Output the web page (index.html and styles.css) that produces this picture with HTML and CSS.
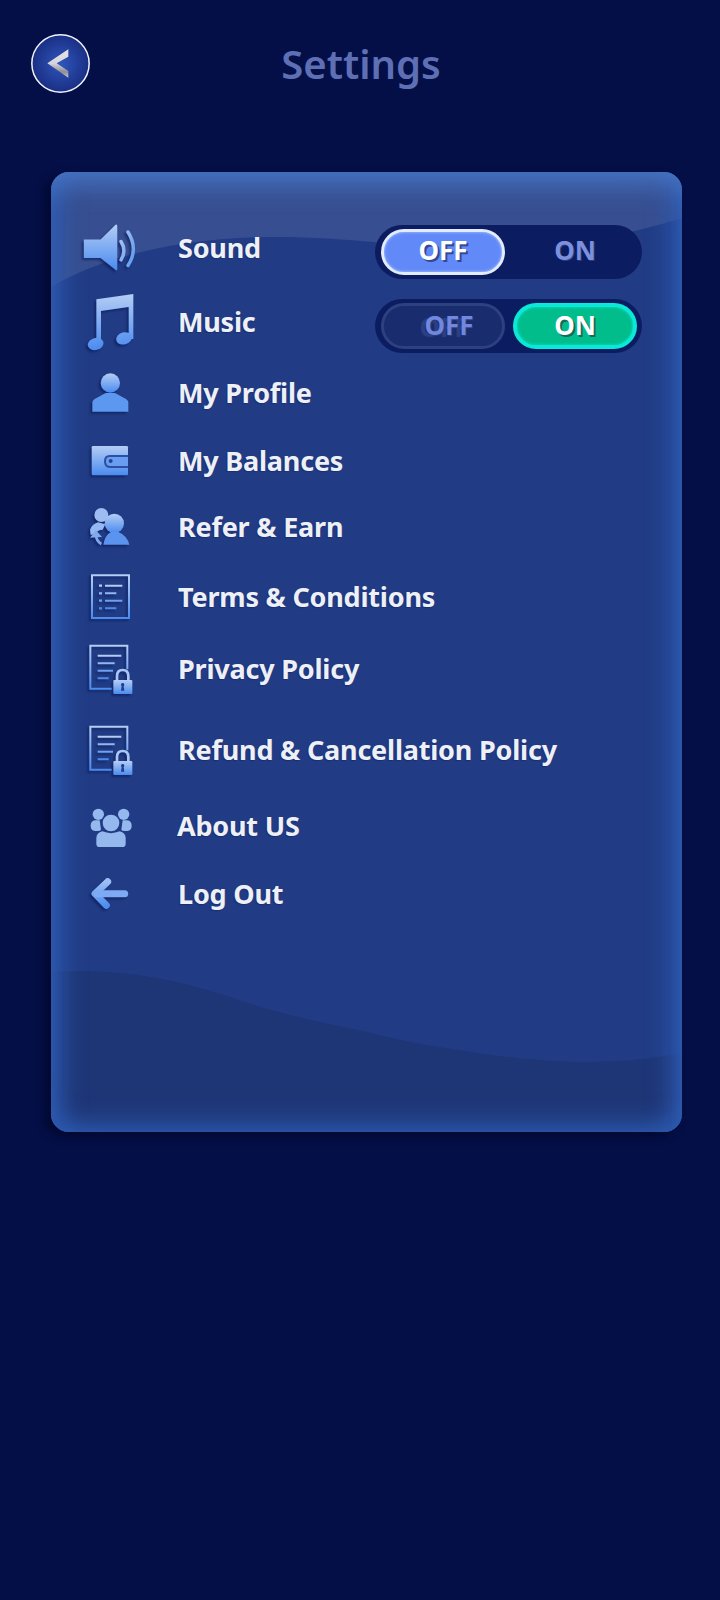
FILE: index.html
```html
<!DOCTYPE html>
<html lang="en">
<head>
<meta charset="utf-8">
<title>Settings</title>
<link rel="stylesheet" href="styles.css">
</head>
<body>
<svg class="defs" width="0" height="0" aria-hidden="true">
  <defs>
    <linearGradient id="blue" x1="0" y1="0" x2="0" y2="1">
      <stop offset="0" stop-color="#b4cdf5"/>
      <stop offset="1" stop-color="#4a8bef"/>
    </linearGradient>
    <linearGradient id="note" gradientUnits="userSpaceOnUse" x1="0" y1="257" x2="0" y2="425">
      <stop offset="0" stop-color="#b4cdf5"/>
      <stop offset="1" stop-color="#4a8bef"/>
    </linearGradient>
    <linearGradient id="side" x1="0" y1="0" x2="1" y2="1">
      <stop offset="0" stop-color="#a9c6f5"/>
      <stop offset="1" stop-color="#5c97f0"/>
    </linearGradient>
    <linearGradient id="arrow" x1="0" y1="0" x2="0" y2="1">
      <stop offset="0" stop-color="#9cbef4"/>
      <stop offset="1" stop-color="#4f8eef"/>
    </linearGradient>
    <linearGradient id="silver" x1="0" y1="0" x2="0" y2="1">
      <stop offset="0" stop-color="#e6e6ea"/>
      <stop offset=".5" stop-color="#d4d4d9"/>
      <stop offset=".8" stop-color="#8d8d95"/>
      <stop offset="1" stop-color="#c9c9ce"/>
    </linearGradient>
    <radialGradient id="knob">
      <stop offset="0" stop-color="#2f56bd"/>
      <stop offset="1" stop-color="#1a2f84"/>
    </radialGradient>
  </defs>
</svg>

<header class="topbar">
  <button class="back" type="button" aria-label="Back">
    <svg width="59" height="59" viewBox="0 0 177 177">
      <circle cx="88.5" cy="88.500" r="86" fill="url(#knob)" stroke="#f1f3fb" stroke-width="4.500"/>
      <path d="M112 46V68L77 88L112 111V131L49 88Z" fill="url(#silver)"/>
    </svg>
  </button>
  <h1 class="title">Settings</h1>
</header>

<main class="panel">
  <svg class="waves" viewBox="0 0 631 960" preserveAspectRatio="none" aria-hidden="true">
    <path class="wave-top" d="M0 115C50 85 130 65 224 65C300 65 350 75 430 77C500 78 570 65 631 46V0H0Z"/>
    <path class="wave-bottom" d="M0 800C10 799 16 799 22 799C70 799 120 805 179 825C230 843 270 850 316 860C350 869 380 874 408 878C450 885 495 890 537 890C570 890 600 887 631 881V960H0Z"/>
  </svg>

  <ul class="menu">
    <li class="row row-sound">
      <span class="icon">
        <svg width="63" height="57" viewBox="60 30 190 170">
          <path d="M72 90H125L170 45Q178 38 178 48V182Q178 192 170 184L125 148H72Z" fill="url(#blue)"/>
          <path d="M190 96Q208 125 190 154M212 66Q246 120 212 172" fill="none" stroke="url(#side)" stroke-width="11" stroke-linecap="round"/>
        </svg>
      </span>
      <span class="label">Sound</span>
      <div class="toggle">
        <span class="pill pill-off-active">OFF</span>
        <span class="pill pill-idle">ON</span>
      </div>
    </li>
    <li class="row row-music">
      <span class="icon">
        <svg width="54" height="62" viewBox="68 248 162 186">
          <path d="M108 273L219 257V392H205V296L122 308V408H108Z" fill="url(#note)"/>
          <ellipse cx="106" cy="407" rx="24" ry="18" transform="rotate(-15 106 407)" fill="url(#note)"/>
          <ellipse cx="191" cy="390" rx="24" ry="18" transform="rotate(-15 191 390)" fill="url(#note)"/>
        </svg>
      </span>
      <span class="label">Music</span>
      <div class="toggle">
        <span class="pill pill-off-dim">OFF</span>
        <span class="pill pill-on">ON</span>
      </div>
    </li>
    <li class="row row-profile">
      <span class="icon">
        <svg width="44" height="44" viewBox="85 488 132 132">
          <circle cx="152" cy="524" r="29" fill="url(#blue)"/>
          <path d="M98 610V582Q98 574 112 568L138 554H166L192 568Q206 574 206 582V610Z" fill="#5c97f0"/>
        </svg>
      </span>
      <span class="label">My Profile</span>
    </li>
    <li class="row row-balances">
      <span class="icon">
        <svg width="42" height="34" viewBox="60 44 126 102">
          <rect x="68" y="50" width="109" height="88" rx="4" fill="url(#blue)"/>
          <path d="M177 80H122Q108 80 108 96Q108 113 122 113H177" fill="#6a9df0" stroke="#2b4ea6" stroke-width="6"/>
          <circle cx="125" cy="95" r="6" fill="#234598"/>
        </svg>
      </span>
      <span class="label">My Balances</span>
    </li>
    <li class="row row-refer">
      <span class="icon">
        <svg width="44" height="40" viewBox="58 234 132 120">
          <circle cx="98" cy="258" r="21" fill="#9dbdf2"/>
          <path d="M64 302Q70 286 88 280L110 286L102 302Q88 302 80 314L66 318Z" fill="#94b8f1"/>
          <path d="M98 345Q82 336 82 316" fill="none" stroke="#80a9ef" stroke-width="8"/>
          <path d="M64 326L82 304L100 324Z" fill="#80a9ef"/>
          <circle cx="137" cy="283" r="29" fill="url(#blue)"/>
          <path d="M104 347Q108 318 128 308H148Q176 320 182 347Z" fill="#5a94ef"/>
        </svg>
      </span>
      <span class="label">Refer &amp; Earn</span>
    </li>
    <li class="row row-terms">
      <span class="icon">
        <svg width="42" height="48" viewBox="60 430 126 142">
          <path d="M69 436H180V564H69Z" fill="none" stroke="url(#blue)" stroke-width="6"/>
          <path d="M108 467H160M108 490H142M108 512H160M108 535H142" fill="none" stroke="url(#blue)" stroke-width="6"/>
          <path d="M90 467H99M90 490H99M90 512H99M90 535H99" fill="none" stroke="url(#blue)" stroke-width="7"/>
        </svg>
      </span>
      <span class="label">Terms &amp; Conditions</span>
    </li>
    <li class="row row-privacy">
      <span class="icon">
        <svg width="47" height="54" viewBox="50 34 141 162">
          <path d="M124 174H60V45H171V116" fill="none" stroke="url(#blue)" stroke-width="6"/>
          <path d="M82 75H153M82 98H133M82 120H128M82 143H115" fill="none" stroke="url(#blue)" stroke-width="6"/>
          <path d="M140 150V136Q140 118 157 118Q174 118 174 136V150" fill="none" stroke="#a9c6f5" stroke-width="8"/>
          <rect x="129" y="148" width="57" height="42" rx="3" fill="url(#blue)"/>
          <path d="M157 157a5 5 0 0 1 3 9l2 14h-10l2-14a5 5 0 0 1 3-9Z" fill="#1f3d8d"/>
        </svg>
      </span>
      <span class="label">Privacy Policy</span>
    </li>
    <li class="row row-refund">
      <span class="icon">
        <svg width="47" height="54" viewBox="50 34 141 162">
          <path d="M124 174H60V45H171V116" fill="none" stroke="url(#blue)" stroke-width="6"/>
          <path d="M82 75H153M82 98H133M82 120H128M82 143H115" fill="none" stroke="url(#blue)" stroke-width="6"/>
          <path d="M140 150V136Q140 118 157 118Q174 118 174 136V150" fill="none" stroke="#a9c6f5" stroke-width="8"/>
          <rect x="129" y="148" width="57" height="42" rx="3" fill="url(#blue)"/>
          <path d="M157 157a5 5 0 0 1 3 9l2 14h-10l2-14a5 5 0 0 1 3-9Z" fill="#1f3d8d"/>
        </svg>
      </span>
      <span class="label">Refund &amp; Cancellation Policy</span>
    </li>
    <li class="row row-about">
      <span class="icon icon-flat">
        <svg width="44" height="42" viewBox="58 52 132 126">
          <g fill="#95b9ee">
            <circle cx="86" cy="74" r="17"/>
            <circle cx="162" cy="74" r="17"/>
            <path d="M63 108Q63 94 76 92H90L94 120Q92 124 84 124H76Q63 122 63 108Z"/>
            <path d="M186 108Q186 94 173 92H159L155 120Q157 124 165 124H173Q186 122 186 108Z"/>
            <circle cx="124" cy="100" r="25"/>
            <path d="M80 162V146Q80 130 98 125Q124 136 150 125Q168 130 168 146V162Q168 172 158 172H90Q80 172 80 162Z"/>
          </g>
        </svg>
      </span>
      <span class="label label-about">About US</span>
    </li>
    <li class="row row-logout">
      <span class="icon">
        <svg width="42" height="34" viewBox="60 263 126 102">
          <path d="M116 277L78 313L112 348" fill="none" stroke="url(#arrow)" stroke-width="21" stroke-linecap="round" stroke-linejoin="round"/>
          <path d="M84 313H167" fill="none" stroke="#7daaf2" stroke-width="21" stroke-linecap="round"/>
        </svg>
      </span>
      <span class="label">Log Out</span>
    </li>
  </ul>
</main>
</body>
</html>
```
FILE: styles.css
```css
* {
  box-sizing: border-box;
}

html,
body {
  margin: 0;
  padding: 0;
}

body {
  width: 720px;
  height: 1600px;
  overflow: hidden;
  background: #040f47;
  font-family: "Noto Sans", "Open Sans", sans-serif;
}

.defs {
  position: absolute;
}

.topbar {
  display: grid;
  grid-template-columns: 59px 1fr 59px;
  align-items: center;
  padding: 34px 31px 0;
}

.back {
  display: block;
  width: 59px;
  height: 59px;
  padding: 0;
  border: 0;
  background: none;
}

.back svg {
  display: block;
}

.title {
  margin: 0 0 0 2px;
  text-align: center;
  color: #5e6fb5;
  font-size: 40px;
  font-weight: 600;
  line-height: 59px;
}

.panel {
  position: relative;
  width: 631px;
  height: 960px;
  margin: 79px 0 0 51px;
  border-radius: 18px;
  background: #213c85;
  box-shadow: -6px 4px 8px rgba(0, 4, 36, 0.65);
}

.waves {
  position: absolute;
  inset: 0;
  width: 100%;
  height: 100%;
  border-radius: 18px;
}

.wave-top {
  fill: #374f90;
}

.wave-bottom {
  fill: #1e3676;
}

.panel::after {
  content: "";
  position: absolute;
  inset: 0;
  border-radius: 18px;
  pointer-events: none;
  box-shadow:
    inset 0 30px 26px -18px #4673c2,
    inset 0 -22px 24px -14px #2c58ad,
    inset 26px 0 24px -16px #2f5cb3,
    inset -26px 0 24px -16px #2f5cb3;
}

.menu {
  position: relative;
  z-index: 1;
  margin: 0;
  padding: 37px 39px 0 29px;
  list-style: none;
}

.row {
  display: flex;
  align-items: center;
}

.row-sound { height: 77px; }
.row-music { height: 72px; }
.row-profile { height: 70px; }
.row-balances { height: 66px; }
.row-refer { height: 65px; }
.row-terms { height: 75px; }
.row-privacy { height: 70px; }
.row-refund { height: 92px; }
.row-about { height: 60px; }
.row-logout { height: 76px; }

.icon {
  display: flex;
  flex: none;
  justify-content: center;
  width: 60px;
  margin-right: 38px;
  filter: drop-shadow(-2px 2px 1px rgba(10, 25, 85, 0.6));
}

.icon-flat {
  filter: none;
  padding: 4px 0 0 2px;
}

.label {
  color: #eef0f5;
  font-size: 27px;
  font-weight: 700;
  line-height: 38px;
  white-space: nowrap;
  letter-spacing: -0.2px;
  text-shadow: -1px 1px 1px rgba(15, 30, 90, 0.45);
}

.label-about {
  margin-left: -1px;
}

.toggle {
  display: flex;
  justify-content: space-between;
  flex: none;
  width: 267px;
  height: 54px;
  margin: 8px 1px 0 auto;
  padding: 4px 5px 4px 6px;
  border-radius: 27px;
  background: #0b1d60;
}

.pill {
  display: flex;
  align-items: center;
  justify-content: center;
  width: 124px;
  height: 46px;
  padding-bottom: 3px;
  border-radius: 23px;
  font-size: 26px;
  font-weight: 700;
}

.pill-off-active {
  border: 3px solid #e3ecff;
  background: #6289f8;
  box-shadow: inset 0 0 3px #bcd2ff;
  color: #fff;
  text-shadow: 2px 2px 0 #33488f;
}

.pill-idle {
  color: #7c90dd;
  text-shadow: 1px 1px 0 #2a3c7a;
}

.pill-off-dim {
  padding-left: 12px;
  border: 3px solid #2d4080;
  background: #182c6e;
  color: #7088e0;
  text-shadow: 1px 1px 0 #2a3c7a, -5px 2px 1px #2e4080;
}

.pill-on {
  border: 4px solid #0ce8d8;
  background: #00bd8b;
  box-shadow: inset 0 0 3px #0ce8d8;
  color: #fff;
  text-shadow: 2px 2px 0 #146a5c;
}
```
